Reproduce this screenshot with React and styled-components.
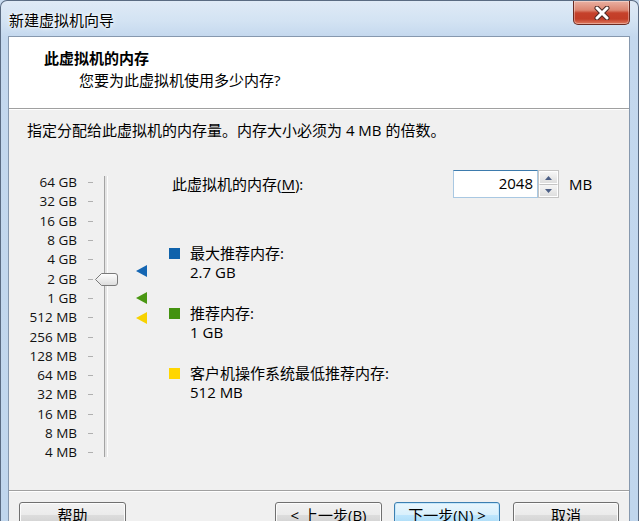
import React from "react";
import styled, { createGlobalStyle } from "styled-components";

const FONT = `"Segoe UI", "Open Sans", "Noto Sans CJK SC", sans-serif`;

const GlobalStyle = createGlobalStyle`
  html, body { margin: 0; padding: 0; }
  body { width: 639px; height: 521px; overflow: hidden; font-family: ${FONT}; background: #c9dcf0; }
  * { box-sizing: border-box; }
`;

const Window = styled.div`
  width: 639px;
  height: 521px;
  overflow: hidden;
  display: flex;
  flex-direction: column;
  border: 1px solid #5a6b82;
  border-bottom: none;
  border-radius: 7px 7px 0 0;
  background: linear-gradient(180deg, #dfeaf6 0px, #d3e3f3 20px, #c4d8ee 36px, #c0d6ed 100%);
`;

const TitleBar = styled.div`
  height: 35px;
  display: flex;
  align-items: flex-start;
  flex-shrink: 0;
`;

const TitleText = styled.div`
  padding: 11px 0 0 8px;
  font-size: 15px;
  line-height: 17px;
  color: #000;
  text-shadow: 0 0 6px #fff, 0 0 3px #fff;
`;

const CloseButton = styled.div`
  margin-left: auto;
  margin-right: 8px;
  width: 57px;
  height: 24px;
  border: 1px solid #6b2b22;
  border-top: none;
  border-radius: 0 0 5px 5px;
  background: linear-gradient(180deg, #eab1a3 0%, #dc8570 40%, #c5412b 52%, #c23d27 78%, #df7a5f 100%);
  box-shadow: inset 0 0 0 1px rgba(255, 255, 255, 0.35);
  display: flex;
  align-items: center;
  justify-content: center;
`;

const Client = styled.div`
  flex: 1;
  margin: 0 8px 0 7px;
  border: 1px solid #8698ae;
  border-bottom: none;
  background: #f0f0f0;
  display: flex;
  flex-direction: column;
  overflow: hidden;
  font-size: 15px;
  color: #000;
`;

const Header = styled.div`
  height: 72px;
  flex-shrink: 0;
  background: #fff;
  border-bottom: 1px solid #a0a0a0;
  padding: 11px 0 0 35px;
`;

const HeaderTitle = styled.div`
  font-weight: bold;
  font-size: 15px;
  line-height: 20px;
`;

const HeaderSub = styled.div`
  margin-top: 2px;
  padding-left: 35px;
  line-height: 20px;
`;

const Main = styled.div`
  height: 381px;
  flex-shrink: 0;
  padding: 12px 0 0 18px;
  box-shadow: inset 0 1px 0 #fff;
`;

const Instruction = styled.div`
  line-height: 18px;
`;

const Content = styled.div`
  display: flex;
  margin-top: 31px;
`;

const SliderBox = styled.div`
  display: flex;
  padding-top: 3px;
`;

const ROW = 19.3;

const ScaleList = styled.div`
  display: grid;
  grid-template-columns: 50px 18px;
  grid-auto-rows: ${ROW}px;
  align-items: center;
`;

const ScaleLabel = styled.div`
  text-align: right;
  font-size: 13.5px;
  line-height: 19px;
  white-space: nowrap;
  color: #111;
`;

const Tick = styled.div`
  width: 5px;
  height: 1px;
  margin-left: 11px;
  background: #b0b0b0;
`;

const TrackColumn = styled.div`
  position: relative;
  width: 22px;
`;

const TrackLine = styled.div`
  position: absolute;
  left: 9px;
  top: 3px;
  width: 4px;
  height: 281px;
  border-left: 1px solid #a3a3a3;
  border-right: 1px solid #fdfdfd;
  background: #e4e4e4;
`;

const Thumb = styled.svg`
  position: absolute;
  left: 0;
`;

const MarkerColumn = styled.div`
  position: relative;
  width: 30px;
`;

const Marker = styled.svg`
  position: absolute;
  right: 0;
`;

const RightPanel = styled.div`
  margin-left: 25px;
  display: flex;
  flex-direction: column;
`;

const MemRow = styled.div`
  display: flex;
  align-items: center;
  height: 28px;
`;

const MemLabel = styled.div`
  width: 281px;
  line-height: 18px;
  u { text-decoration: underline; text-underline-offset: 2px; }
`;

const SpinInput = styled.div`
  width: 85px;
  height: 28px;
  background: #fff;
  border: 1px solid #a9c8e2;
  border-top-color: #3d7bad;
  text-align: right;
  padding-right: 4px;
  line-height: 25px;
  font-size: 15px;
`;

const SpinButtons = styled.div`
  width: 21px;
  height: 28px;
  display: flex;
  flex-direction: column;
  border: 1px solid #c4c4c4;
  background: #f4f4f4;
`;

const SpinBtn = styled.div`
  flex: 1;
  display: flex;
  align-items: center;
  justify-content: center;
  border: 1px solid #fff;
  background: linear-gradient(180deg, #f6f6f6, #dedede);
  & + & { border-top: 1px solid #c4c4c4; }
`;

const MBLabel = styled.div`
  margin-left: 10px;
`;

const Legend = styled.div`
  margin-top: 46px;
  margin-left: -3px;
  display: flex;
  flex-direction: column;
  gap: 22px;
`;

const LegendItem = styled.div`
  display: grid;
  grid-template-columns: 21px auto;
`;

const SwatchCell = styled.div`
  height: 19px;
  display: flex;
  align-items: center;
`;

const Swatch = styled.div`
  width: 11px;
  height: 11px;
  background: ${(p) => p.$color};
`;

const LegendText = styled.div`
  line-height: 19px;
`;

const Footer = styled.div`
  flex-shrink: 0;
  border-top: 1px solid #a0a0a0;
  box-shadow: inset 0 1px 0 #fff;
  padding: 11px 10px 0 10px;
  display: flex;
`;

const Button = styled.div`
  width: ${(p) => p.$w}px;
  height: 25px;
  margin-left: ${(p) => (p.$auto ? "auto" : `${p.$ml || 0}px`)};
  border: 1px solid ${(p) => (p.$default ? "#3c7fb1" : "#707070")};
  border-radius: 3px;
  background: ${(p) =>
    p.$default
      ? "linear-gradient(180deg, #eaf6fd 0%, #d9f0fc 50%, #bee6fd 51%, #a7d9f5 100%)"
      : "linear-gradient(180deg, #f2f2f2 0%, #ebebeb 50%, #dddddd 51%, #cfcfcf 100%)"};
  box-shadow: inset 0 0 0 1px ${(p) => (p.$default ? "#c5e7fb" : "#fcfcfc")};
  display: flex;
  justify-content: center;
  align-items: center;
  font-size: 15px;
  line-height: 18px;
  color: #000;
`;

const scale = [
  "64 GB", "32 GB", "16 GB", "8 GB", "4 GB", "2 GB", "1 GB",
  "512 MB", "256 MB", "128 MB", "64 MB", "32 MB", "16 MB", "8 MB", "4 MB",
];

// index on scale for a memory amount in MB (64 GB = index 0)
const idxFor = (mb) => Math.log2(65536 / mb);
const centerOf = (mb) => idxFor(mb) * ROW + ROW / 2;

const markers = [
  { mb: 2765, color: "#1466b3" },
  { mb: 1024, color: "#4a9713" },
  { mb: 512, color: "#f7d200" },
];

const legend = [
  { color: "#0f62ab", title: "最大推荐内存:", value: "2.7 GB" },
  { color: "#43920f", title: "推荐内存:", value: "1 GB" },
  { color: "#ffd600", title: "客户机操作系统最低推荐内存:", value: "512 MB" },
];

export default function App() {
  const thumbTop = centerOf(2048) - 6;
  return (
    <>
      <GlobalStyle />
      <Window>
        <TitleBar>
          <TitleText>新建虚拟机向导</TitleText>
          <CloseButton>
            <svg width="18" height="14" viewBox="0 0 18 14">
              <path
                d="M4 2 L14 12 M14 2 L4 12"
                stroke="#4a2a26"
                strokeWidth="5"
                strokeLinecap="round"
              />
              <path
                d="M4 2 L14 12 M14 2 L4 12"
                stroke="#fff"
                strokeWidth="3"
                strokeLinecap="round"
              />
            </svg>
          </CloseButton>
        </TitleBar>
        <Client>
          <Header>
            <HeaderTitle>此虚拟机的内存</HeaderTitle>
            <HeaderSub>您要为此虚拟机使用多少内存?</HeaderSub>
          </Header>
          <Main>
            <Instruction>指定分配给此虚拟机的内存量。内存大小必须为 4 MB 的倍数。</Instruction>
            <Content>
              <SliderBox>
                <ScaleList>
                  {scale.map((s) => (
                    <React.Fragment key={s}>
                      <ScaleLabel>{s}</ScaleLabel>
                      <Tick />
                    </React.Fragment>
                  ))}
                </ScaleList>
                <TrackColumn>
                  <TrackLine />
                  <Thumb width="23" height="13" viewBox="0 0 23 13" style={{ top: thumbTop }}>
                    <defs>
                      <linearGradient id="tg" x1="0" y1="0" x2="0" y2="1">
                        <stop offset="0" stopColor="#ffffff" />
                        <stop offset="1" stopColor="#dcdcdc" />
                      </linearGradient>
                    </defs>
                    <path
                      d="M0.5 6.5 L6.5 0.5 H20 Q22.5 0.5 22.5 3 V10 Q22.5 12.5 20 12.5 H6.5 Z"
                      fill="url(#tg)"
                      stroke="#7a7a7a"
                    />
                  </Thumb>
                </TrackColumn>
                <MarkerColumn>
                  {markers.map((m) => (
                    <Marker
                      key={m.mb}
                      width="11"
                      height="12"
                      viewBox="0 0 11 12"
                      style={{ top: centerOf(m.mb) - 6 }}
                    >
                      <path d="M0 6 L11 0 V12 Z" fill={m.color} />
                    </Marker>
                  ))}
                </MarkerColumn>
              </SliderBox>
              <RightPanel>
                <MemRow>
                  <MemLabel>
                    此虚拟机的内存(<u>M</u>):
                  </MemLabel>
                  <SpinInput>2048</SpinInput>
                  <SpinButtons>
                    <SpinBtn>
                      <svg width="7" height="4" viewBox="0 0 7 4">
                        <path d="M0 4 L3.5 0 L7 4 Z" fill="#4c5f86" />
                      </svg>
                    </SpinBtn>
                    <SpinBtn>
                      <svg width="7" height="4" viewBox="0 0 7 4">
                        <path d="M0 0 L7 0 L3.5 4 Z" fill="#4c5f86" />
                      </svg>
                    </SpinBtn>
                  </SpinButtons>
                  <MBLabel>MB</MBLabel>
                </MemRow>
                <Legend>
                  {legend.map((l) => (
                    <LegendItem key={l.title}>
                      <SwatchCell>
                        <Swatch $color={l.color} />
                      </SwatchCell>
                      <LegendText>{l.title}</LegendText>
                      <span />
                      <LegendText>{l.value}</LegendText>
                    </LegendItem>
                  ))}
                </Legend>
              </RightPanel>
            </Content>
          </Main>
          <Footer>
            <Button $w={107}>帮助</Button>
            <Button $w={107} $auto>&lt; 上一步(B)</Button>
            <Button $w={106} $ml={12} $default>下一步(N) &gt;</Button>
            <Button $w={106} $ml={13}>取消</Button>
          </Footer>
        </Client>
      </Window>
    </>
  );
}
